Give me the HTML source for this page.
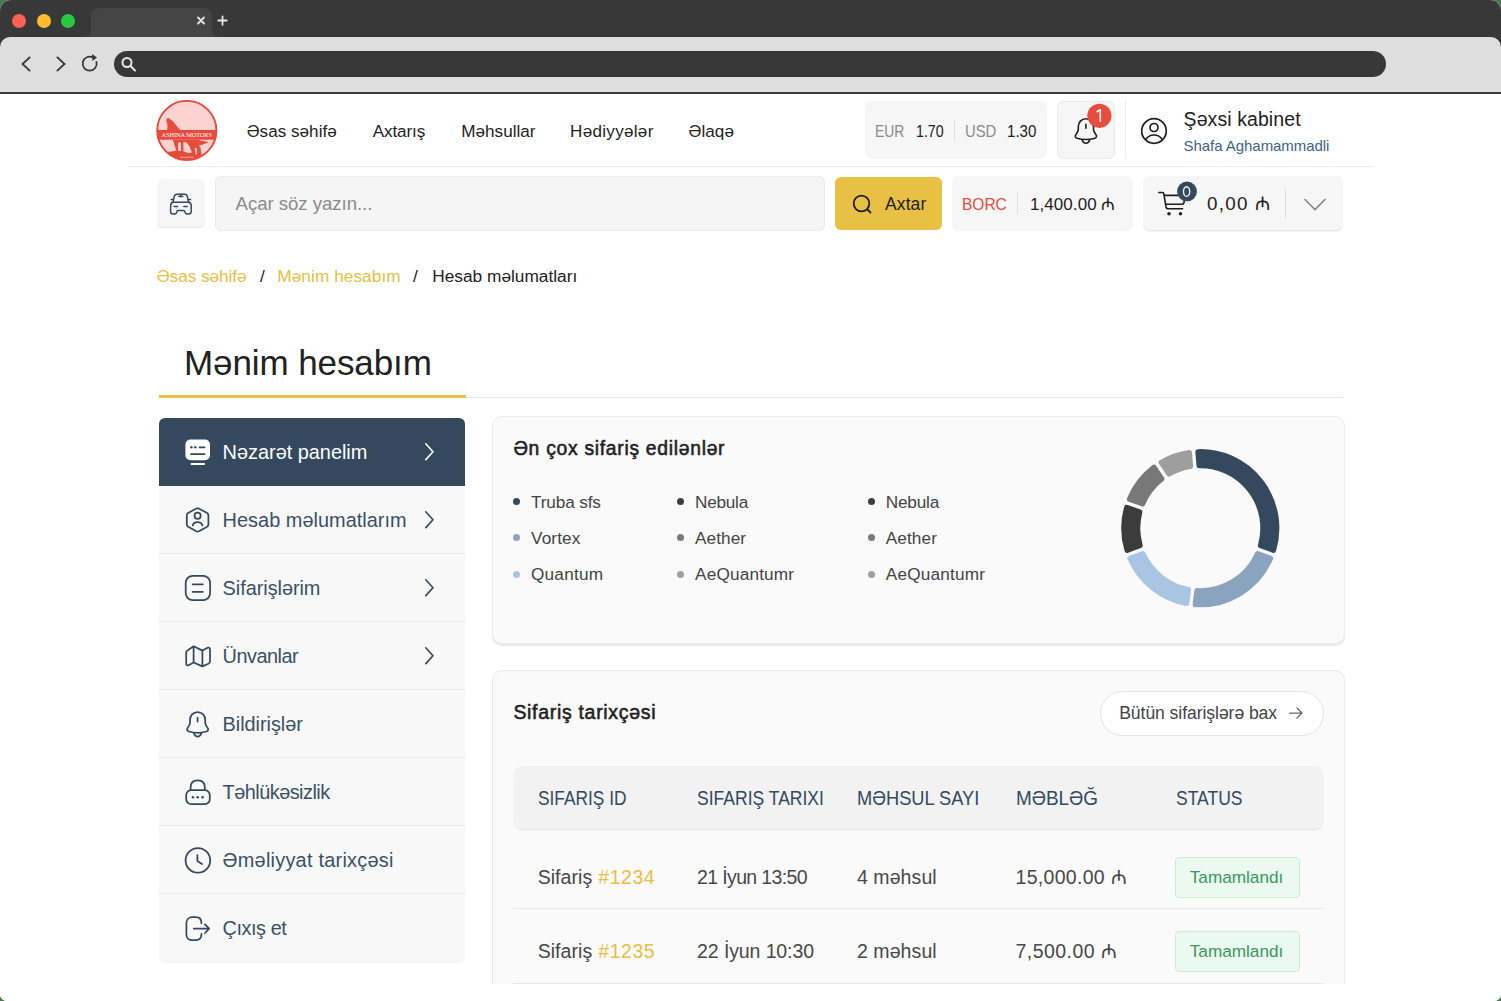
<!DOCTYPE html>
<html><head><meta charset="utf-8">
<style>
*{box-sizing:border-box;margin:0;padding:0}
html,body{width:1501px;height:1001px;overflow:hidden;background:#4a7a52;font-family:"Liberation Sans",sans-serif}
.win{position:absolute;left:0;top:0;width:1501px;height:1001px;border-radius:11px 11px 7px 7px;overflow:hidden;background:#fff}
.abs{position:absolute}
.t{position:absolute;white-space:nowrap;line-height:1}
</style></head><body>
<div class="win">
<div class="abs" style="left:0px;top:0px;width:1501px;height:60px;background:#383838"></div>
<div class="abs" style="left:12.4px;top:14.3px;width:14px;height:14px;border-radius:50%;background:#fe5f57"></div>
<div class="abs" style="left:36.6px;top:14.3px;width:14px;height:14px;border-radius:50%;background:#febc2e"></div>
<div class="abs" style="left:60.8px;top:14.3px;width:14px;height:14px;border-radius:50%;background:#28c840"></div>
<svg class="abs" style="left:80px;top:0" width="150" height="37" viewBox="0 0 150 37">
<path d="M4 37 C9 37 11 34 11 30 V16 C11 11.5 14.5 8 19 8 H124 C128.5 8 132 11.5 132 16 V30 C132 34 134 37 139 37 Z" fill="#454545"/>
</svg>
<div class="abs" style="left:0px;top:37px;width:1501px;height:55px;background:#dedede;border-radius:10px 10px 0 0"></div>
<div class="abs" style="left:0px;top:92px;width:1501px;height:2px;background:#3a3a3a"></div>
<div class="abs" style="left:114px;top:51px;width:1272px;height:26px;background:#383838;border-radius:13px"></div>
<svg class="abs" style="left:0;top:0" width="240" height="93" viewBox="0 0 240 93">
<g stroke="#e8e8e8" stroke-width="1.8" stroke-linecap="round" fill="none">
<path d="M198 17.5 L204 23.5 M204 17.5 L198 23.5"/>
<path d="M222.5 16.3 V24.8 M218.3 20.5 H226.7"/>
</g>
<g stroke="#383838" stroke-width="1.8" fill="none" stroke-linecap="square">
<path d="M29.5 57.5 L22.5 64 L29.5 70.5"/>
<path d="M57.5 57.5 L64.5 64 L57.5 70.5"/>
<path d="M96.5 62 A7 7 0 1 1 93 57.5"/>
</g>
<path d="M92 54 L97 57.5 L92.5 61 Z" fill="#383838"/>
<g stroke="#e8e8e8" stroke-width="2" fill="none">
<circle cx="127" cy="62.5" r="4.5"/>
<path d="M130.5 66 L135 70.5" stroke-linecap="round"/>
</g>
</svg>
<svg class="abs" style="left:156px;top:100px" width="62" height="62" viewBox="0 0 62 62">
<defs><clipPath id="lc"><circle cx="30.8" cy="30.5" r="29.6"/></clipPath></defs>
<circle cx="30.8" cy="30.5" r="29.6" fill="#fcd3d1"/>
<g clip-path="url(#lc)">
<path d="M0 39.6 H62 V62 H0 Z" fill="#e84a3c"/>
<path d="M11.2 30 L11.5 25.6 L10.2 19.9 L12 17.8 L14.6 19.4 L17.2 21.4 L19 24 L20.3 25.6 L22.5 28 L24.5 30 Z" fill="#e84a3c"/>
<g fill="#fcd3d1">
<path d="M0 39.6 H16.7 L18.5 45 L20.3 50.5 L17 51.3 L13 51.8 L0 52.5 Z"/>
<path d="M22.1 42.7 L24.8 42.3 L25 51 L22.3 51 Z"/>
<path d="M27.2 42.5 L29.5 42 L31.5 43.5 L33.3 46 L34.5 49 L36 52.5 L33 53 L29 52 L27.5 51.5 Z"/>
<path d="M38.8 47.5 L40.8 48.5 L41 54.5 L39.5 54.5 Z"/>
<path d="M43.5 39.6 H62 V53 L45.5 54.5 L44.5 48 L43 45.5 L47 44.5 L52.8 42.2 L47 41 L43.5 40.3 Z"/>
</g>
<rect x="0" y="30" width="62" height="9.6" fill="#e84a3c"/>
</g>
<circle cx="30.8" cy="30.5" r="29.6" fill="none" stroke="#e84a3c" stroke-width="1.9"/>
<text x="5.5" y="37" textLength="50.4" lengthAdjust="spacingAndGlyphs" font-family="Liberation Serif" font-size="6" fill="#fff">ASHINA MOTORS</text>
<path d="M24 57.3 H37.7" stroke="#f6b5ae" stroke-width="0.9"/>
</svg>
<div class="t" style="left:246.7px;top:122.82px;font-size:17.1px;color:#222;letter-spacing:0.022px;">Əsas səhifə</div>
<div class="t" style="left:372.7px;top:122.82px;font-size:17.1px;color:#222;letter-spacing:-0.097px;">Axtarış</div>
<div class="t" style="left:461.3px;top:122.82px;font-size:17.1px;color:#222;letter-spacing:0.02px;">Məhsullar</div>
<div class="t" style="left:570.1px;top:122.82px;font-size:17.1px;color:#222;letter-spacing:0.276px;">Hədiyyələr</div>
<div class="t" style="left:688.5px;top:122.82px;font-size:17.1px;color:#222;letter-spacing:0.064px;">Əlaqə</div>
<div class="abs" style="left:865px;top:101px;width:182px;height:58px;background:#f6f6f6;border-radius:7px"></div>
<div class="t" style="left:874.7px;top:122.61px;font-size:17px;color:#8a8a8a;transform:scaleX(0.8168);transform-origin:0.0px 0;">EUR</div>
<div class="t" style="left:916.0px;top:122.61px;font-size:17px;color:#222;transform:scaleX(0.8356);transform-origin:0.0px 0;">1.70</div>
<div class="abs" style="left:953.5px;top:120px;width:1px;height:21px;background:#e0e0e0"></div>
<div class="t" style="left:964.7px;top:122.61px;font-size:17px;color:#8a8a8a;transform:scaleX(0.8726);transform-origin:0.0px 0;">USD</div>
<div class="t" style="left:1007.3px;top:122.61px;font-size:17px;color:#222;transform:scaleX(0.8869);transform-origin:0.0px 0;">1.30</div>
<div class="abs" style="left:1057px;top:101px;width:58px;height:58px;background:#f6f6f6;border:1px solid #ebebeb;border-radius:6px"></div>
<svg class="abs" style="left:0;top:0" width="1501" height="1001" viewBox="0 0 1501 1001">
<g transform="translate(888.3 -593.2)" fill="none" stroke="#1e1e1e" stroke-width="1.6" stroke-linecap="round" stroke-linejoin="round">
<path d="M197.6 712 C193 712 190 715.5 190 720 V722.5 C190 724.5 189 726 187.8 727.5 C186.5 729 186.8 730.8 188.8 731.5 C194 733 201.2 733 206.4 731.5 C208.4 730.8 208.7 729 207.4 727.5 C206.2 726 205.2 724.5 205.2 722.5 V720 C205.2 715.5 202.2 712 197.6 712 Z"/>
<path d="M193.8 733 C194.5 735.5 196 736.5 197.6 736.5 C199.2 736.5 200.7 735.5 201.4 733 M197.6 717.6 V721.5"/>
</g>
<circle cx="1099.4" cy="115.8" r="12.1" fill="#e84c3d"/>
<path d="M1096.6 112 L1100.3 109.7 V121.8" fill="none" stroke="#fff" stroke-width="1.5" stroke-linejoin="round"/>
</svg>
<div class="abs" style="left:1125px;top:101px;width:1px;height:58px;background:#ececec"></div>
<svg class="abs" style="left:1140px;top:117px" width="28" height="28" viewBox="0 0 28 28">
<g fill="none" stroke="#1e1e1e" stroke-width="1.7">
<circle cx="14" cy="14" r="12.3"/><circle cx="14" cy="10.5" r="4"/>
<path d="M5.8 22.5 C8 19 11 18 14 18 C17 18 20 19 22.2 22.5"/>
</g></svg>
<div class="t" style="left:1183.6px;top:109.69px;font-size:19.5px;color:#222;letter-spacing:0.081px;">Şəxsi kabinet</div>
<div class="t" style="left:1183.6px;top:137.9px;font-size:15px;color:#3f5f86;letter-spacing:-0.053px;">Shafa Aghamammadli</div>
<div class="abs" style="left:128px;top:166px;width:1245px;height:1px;background:#ececec"></div>
<div class="abs" style="left:157px;top:179px;width:48px;height:48px;background:#f6f6f6;border-radius:6px;box-shadow:0 1px 0 #e6e6e6"></div>
<svg class="abs" style="left:0;top:0" width="1501" height="1001" viewBox="0 0 1501 1001">
<g transform="translate(165 189)" fill="none" stroke="#34495e" stroke-width="1.5" stroke-linecap="round" stroke-linejoin="round">
<path d="M8 13.3 L9.2 7.6 C9.5 6.1 10.5 5.2 12 5.2 H19.6 C21.1 5.2 22.1 6.1 22.4 7.6 L23.6 13.3"/>
<path d="M7.8 13.3 H23.8 M13.8 7.6 H17.8 M15.8 5.3 V7.6 M6.2 10.5 H8.3 M23.3 10.5 H25.5 M9.2 17.5 H12.6 M18.8 17.5 H22.2"/>
<path d="M7.8 13.3 C6.3 13.8 5.6 15 5.6 17 V22.5 C5.6 24 6.5 24.9 8 24.9 H9.8 C10.7 24.9 11.2 24.5 11.5 23.7 L12.2 22.2 C12.5 21.6 13 21.5 13.5 21.5 H18.3 C18.8 21.5 19.3 21.6 19.6 22.2 L20.3 23.7 C20.6 24.5 21.1 24.9 22 24.9 H23.8 C25.3 24.9 26.2 24 26.2 22.5 V17 C26.2 15 25.5 13.8 23.8 13.3"/>
</g></svg>
<div class="abs" style="left:215px;top:176px;width:610px;height:55px;background:#f5f5f5;border:1px solid #ebebeb;border-radius:6px"></div>
<div class="t" style="left:235.6px;top:195.06px;font-size:18.6px;color:#8a8a8a;letter-spacing:-0.041px;">Açar söz yazın...</div>
<div class="abs" style="left:835px;top:177px;width:107px;height:53px;background:#e8c043;border-radius:6px"></div>
<svg class="abs" style="left:851px;top:193px" width="22" height="22" viewBox="0 0 22 22">
<g fill="none" stroke="#1e1e1e" stroke-width="1.8" stroke-linecap="round">
<circle cx="10.5" cy="10.5" r="7.8"/><path d="M16.5 16.5 L19.5 19.5"/>
</g></svg>
<div class="t" style="left:885.0px;top:196.19px;font-size:17.5px;color:#222;letter-spacing:0.106px;">Axtar</div>
<div class="abs" style="left:952px;top:176px;width:181px;height:55px;background:#f6f6f6;border-radius:7px"></div>
<div class="t" style="left:962.4px;top:195.61px;font-size:17px;color:#e74c3c;transform:scaleX(0.9119);transform-origin:0.0px 0;">BORC</div>
<div class="abs" style="left:1017px;top:193px;width:1px;height:21px;background:#dedede"></div>
<div class="t" style="left:1030.0px;top:195.61px;font-size:17px;color:#222;letter-spacing:0.062px;">1,400.00 ₼</div>
<div class="abs" style="left:1143px;top:176px;width:200px;height:54px;background:#f6f6f6;border-radius:7px;box-shadow:0 1.5px 0 #e8e8e8"></div>
<svg class="abs" style="left:0;top:0" width="1501" height="1001" viewBox="0 0 1501 1001">
<g fill="none" stroke="#1e1e1e" stroke-width="1.6" stroke-linecap="round" stroke-linejoin="round">
<path d="M1158.8 192.5 H1162.5 C1163.2 192.5 1163.7 193 1163.8 193.6 L1166 206.8 C1166.2 208 1167.2 208.8 1168.4 208.8 H1182.6"/>
<path d="M1164.6 195.4 H1186 M1166.3 204.2 H1182 C1183 204.2 1183.8 203.5 1184 202.5 L1185.3 196"/>
</g>
<circle cx="1169" cy="213.7" r="1.75" fill="#1e1e1e"/><circle cx="1180.5" cy="213.7" r="1.75" fill="#1e1e1e"/>
<circle cx="1187" cy="191.4" r="9.9" fill="#34495e"/>
<ellipse cx="1186.6" cy="191.55" rx="3.1" ry="4.8" fill="none" stroke="#fff" stroke-width="1.3"/>
</svg>
<div class="t" style="left:1207.0px;top:194.89px;font-size:18.8px;color:#222;letter-spacing:1.313px;">0,00 ₼</div>
<div class="abs" style="left:1284.5px;top:189px;width:1.5px;height:29px;background:#dcdcdc"></div>
<svg class="abs" style="left:1302px;top:196px" width="26" height="16" viewBox="0 0 26 16">
<path d="M2.5 3 L13 13.5 L23.5 3" fill="none" stroke="#858585" stroke-width="1.6"/></svg>
<div class="t" style="left:156.7px;top:267.66px;font-size:17.3px;color:#e8c043;letter-spacing:-0.083px;">Əsas səhifə</div>
<div class="t" style="left:260.0px;top:267.66px;font-size:17.3px;color:#222;">/</div>
<div class="t" style="left:277.3px;top:267.66px;font-size:17.3px;color:#e8c043;letter-spacing:0.033px;">Mənim hesabım</div>
<div class="t" style="left:413.0px;top:267.66px;font-size:17.3px;color:#222;">/</div>
<div class="t" style="left:432.3px;top:267.66px;font-size:17.3px;color:#222;letter-spacing:-0.009px;">Hesab məlumatları</div>
<div class="t" style="left:184.0px;top:344.67px;font-size:35px;color:#222;letter-spacing:-0.096px;">Mənim hesabım</div>
<div class="abs" style="left:159px;top:397px;width:1184px;height:1px;background:#e9e9e9"></div>
<div class="abs" style="left:159px;top:395px;width:306.5px;height:3px;background:#e8c043"></div>
<div class="abs" style="left:159px;top:418px;width:306px;height:544px;background:#f8f8f8;border-radius:6px;box-shadow:0 1px 1px rgba(0,0,0,0.05)"></div>
<div class="abs" style="left:159px;top:418px;width:306px;height:68px;background:#34495e;border-radius:6px 6px 0 0"></div>
<div class="t" style="left:222.6px;top:442.95px;font-size:19.9px;color:#fff;letter-spacing:-0.005px;">Nəzarət panelim</div>
<div class="t" style="left:222.6px;top:510.95px;font-size:19.9px;color:#3b5066;letter-spacing:0.031px;">Hesab məlumatlarım</div>
<div class="abs" style="left:159px;top:553px;width:306px;height:1px;background:#e8e8e8"></div>
<div class="t" style="left:222.6px;top:578.95px;font-size:19.9px;color:#3b5066;letter-spacing:-0.046px;">Sifarişlərim</div>
<div class="abs" style="left:159px;top:621px;width:306px;height:1px;background:#e8e8e8"></div>
<div class="t" style="left:222.6px;top:646.95px;font-size:19.9px;color:#3b5066;letter-spacing:-0.5px;">Ünvanlar</div>
<div class="abs" style="left:159px;top:689px;width:306px;height:1px;background:#e8e8e8"></div>
<div class="t" style="left:222.6px;top:714.95px;font-size:19.9px;color:#3b5066;letter-spacing:-0.039px;">Bildirişlər</div>
<div class="abs" style="left:159px;top:757px;width:306px;height:1px;background:#e8e8e8"></div>
<div class="t" style="left:222.6px;top:782.95px;font-size:19.9px;color:#3b5066;letter-spacing:-0.527px;">Təhlükəsizlik</div>
<div class="abs" style="left:159px;top:825px;width:306px;height:1px;background:#e8e8e8"></div>
<div class="t" style="left:222.6px;top:850.95px;font-size:19.9px;color:#3b5066;letter-spacing:0.241px;">Əməliyyat tarixçəsi</div>
<div class="abs" style="left:159px;top:893px;width:306px;height:1px;background:#e8e8e8"></div>
<div class="t" style="left:222.6px;top:918.95px;font-size:19.9px;color:#3b5066;letter-spacing:-0.466px;">Çıxış et</div>
<svg class="abs" style="left:0;top:0" width="1501" height="1001" viewBox="0 0 1501 1001"><rect x="185.4" y="439.6" width="24.6" height="20.6" rx="5" fill="#fff"/><circle cx="191.4" cy="447.3" r="1.25" fill="#34495e"/><circle cx="195.3" cy="447.3" r="1.25" fill="#34495e"/><path d="M199.4 447.3 H204.6 M191 454.2 H204.6" stroke="#34495e" stroke-width="1.7" stroke-linecap="round"/><path d="M190.8 464 H204.8" stroke="#fff" stroke-width="2"/><path d="M425.8 443.8 L433 451.7 L425.8 459.59999999999997" fill="none" stroke="#fff" stroke-width="1.6" stroke-linecap="round" stroke-linejoin="round"/><path d="M196.3 508.6 C197.1 508.2 198.1 508.2 198.9 508.6 L207.1 513.1 C207.9 513.6 208.4 514.4 208.4 515.3 V524.6 C208.4 525.5 207.9 526.3 207.1 526.8 L198.9 531.3 C198.1 531.7 197.1 531.7 196.3 531.3 L188.1 526.8 C187.3 526.3 186.8 525.5 186.8 524.6 V515.3 C186.8 514.4 187.3 513.6 188.1 513.1 Z" fill="none" stroke="#34495e" stroke-width="1.75"/><circle cx="197.6" cy="515.8" r="3.1" fill="none" stroke="#34495e" stroke-width="1.75"/><path d="M192.8 525.5 C193.3 523.3 195.2 522 197.6 522 C200 522 201.9 523.3 202.4 525.5" fill="none" stroke="#34495e" stroke-width="1.75" stroke-linecap="round"/><path d="M425.8 511.80000000000007 L433 519.7 L425.8 527.6" fill="none" stroke="#34495e" stroke-width="1.6" stroke-linecap="round" stroke-linejoin="round"/><rect x="185.7" y="575.9" width="24.4" height="24.2" rx="7" fill="none" stroke="#34495e" stroke-width="1.75"/><path d="M192.6 584.3 H202.8 M192.6 591.8 H202.8" stroke="#34495e" stroke-width="1.75" stroke-linecap="round"/><path d="M425.8 579.8000000000001 L433 587.7 L425.8 595.6" fill="none" stroke="#34495e" stroke-width="1.6" stroke-linecap="round" stroke-linejoin="round"/><path d="M186.2 652.8 C186.2 651.6 186.8 650.7 187.8 650.2 L193.6 646.3 L202.4 650.6 L207.6 647.8 C208.8 647.2 210 648 210 649.4 V661.2 C210 662.4 209.4 663.3 208.4 663.8 L202.4 666.4 L193.6 662.5 L188.6 665.2 C187.4 665.8 186.2 665 186.2 663.6 Z" fill="none" stroke="#34495e" stroke-width="1.75" stroke-linejoin="round"/><path d="M193.6 646.3 V662.5 M202.4 650.6 V666.4" stroke="#34495e" stroke-width="1.75"/><path d="M425.8 647.8000000000001 L433 655.7 L425.8 663.6" fill="none" stroke="#34495e" stroke-width="1.6" stroke-linecap="round" stroke-linejoin="round"/><path d="M197.6 712 C193 712 190 715.5 190 720 V722.5 C190 724.5 189 726 187.8 727.5 C186.5 729 186.8 730.8 188.8 731.5 C194 733 201.2 733 206.4 731.5 C208.4 730.8 208.7 729 207.4 727.5 C206.2 726 205.2 724.5 205.2 722.5 V720 C205.2 715.5 202.2 712 197.6 712 Z" fill="none" stroke="#34495e" stroke-width="1.75" stroke-linejoin="round"/><path d="M193.8 733 C194.5 735.5 196 736.5 197.6 736.5 C199.2 736.5 200.7 735.5 201.4 733 M197.6 717.6 V721.5" fill="none" stroke="#34495e" stroke-width="1.75" stroke-linecap="round"/><path d="M190.6 790 V787.3 C190.6 782.6 193.5 780.3 197.7 780.3 C201.9 780.3 204.8 782.6 204.8 787.3 V790" fill="none" stroke="#34495e" stroke-width="1.75"/><rect x="186.2" y="790.2" width="23.6" height="14" rx="5" fill="none" stroke="#34495e" stroke-width="1.75"/><circle cx="192.9" cy="797.2" r="1.2" fill="#34495e"/><circle cx="197.7" cy="797.2" r="1.2" fill="#34495e"/><circle cx="202.6" cy="797.2" r="1.2" fill="#34495e"/><circle cx="197.9" cy="860.4" r="12.3" fill="none" stroke="#34495e" stroke-width="1.75"/><path d="M197.4 855 V861 L202 864" fill="none" stroke="#34495e" stroke-width="1.75" stroke-linecap="round" stroke-linejoin="round"/><path d="M201.4 923.2 V922.8 C201.4 919.5 199.3 917.2 195.8 917.2 H192.2 C188.8 917.2 186.4 919.6 186.4 923 V934.4 C186.4 937.8 188.8 940.2 192.2 940.2 H195.8 C199.3 940.2 201.4 937.9 201.4 934.6 V933.8" fill="none" stroke="#34495e" stroke-width="1.75" stroke-linecap="round"/><path d="M193.8 928.6 H209.2 M205 924.3 L209.2 928.6 L205 933" fill="none" stroke="#34495e" stroke-width="1.75" stroke-linecap="round" stroke-linejoin="round"/></svg>
<div class="abs" style="left:492px;top:416px;width:853px;height:228px;background:#fafafa;border:1px solid #ececec;border-radius:10px;box-shadow:0 2px 0 #e9e9e9"></div>
<div class="t" style="left:513.4px;top:439.26px;font-size:19.3px;color:#222;letter-spacing:0.72px;-webkit-text-stroke:0.55px #222;">Ən çox sifariş edilənlər</div>
<div class="abs" style="left:513.0px;top:498.2px;width:7.2px;height:7.2px;border-radius:50%;background:#34495e"></div>
<div class="t" style="left:531.0px;top:493.54px;font-size:17.2px;color:#444;letter-spacing:-0.13px;">Truba sfs</div>
<div class="abs" style="left:513.0px;top:534.2px;width:7.2px;height:7.2px;border-radius:50%;background:#8aa4c0"></div>
<div class="t" style="left:531.0px;top:529.54px;font-size:17.2px;color:#444;letter-spacing:0.125px;">Vortex</div>
<div class="abs" style="left:513.0px;top:570.7px;width:7.2px;height:7.2px;border-radius:50%;background:#a8c5e3"></div>
<div class="t" style="left:531.0px;top:566.04px;font-size:17.2px;color:#444;letter-spacing:0.218px;">Quantum</div>
<div class="abs" style="left:677.1999999999999px;top:498.2px;width:7.2px;height:7.2px;border-radius:50%;background:#3d3d3d"></div>
<div class="t" style="left:695.1px;top:493.54px;font-size:17.2px;color:#444;letter-spacing:-0.265px;">Nebula</div>
<div class="abs" style="left:677.1999999999999px;top:534.2px;width:7.2px;height:7.2px;border-radius:50%;background:#7b7b7b"></div>
<div class="t" style="left:695.1px;top:529.54px;font-size:17.2px;color:#444;letter-spacing:0.052px;">Aether</div>
<div class="abs" style="left:677.1999999999999px;top:570.7px;width:7.2px;height:7.2px;border-radius:50%;background:#a0a0a0"></div>
<div class="t" style="left:695.1px;top:566.04px;font-size:17.2px;color:#444;letter-spacing:0.164px;">AeQuantumr</div>
<div class="abs" style="left:868.1999999999999px;top:498.2px;width:7.2px;height:7.2px;border-radius:50%;background:#3d3d3d"></div>
<div class="t" style="left:885.8px;top:493.54px;font-size:17.2px;color:#444;letter-spacing:-0.205px;">Nebula</div>
<div class="abs" style="left:868.1999999999999px;top:534.2px;width:7.2px;height:7.2px;border-radius:50%;background:#7b7b7b"></div>
<div class="t" style="left:885.8px;top:529.54px;font-size:17.2px;color:#444;letter-spacing:0.092px;">Aether</div>
<div class="abs" style="left:868.1999999999999px;top:570.7px;width:7.2px;height:7.2px;border-radius:50%;background:#a0a0a0"></div>
<div class="t" style="left:885.8px;top:566.04px;font-size:17.2px;color:#444;letter-spacing:0.186px;">AeQuantumr</div>
<svg class="abs" style="left:0;top:0" width="1501" height="1001" viewBox="0 0 1501 1001"><path d="M1198.14 451.93 A76.3 76.3 0 0 1 1273.41 550.02 L1260.70 545.40 A62.8 62.8 0 0 0 1199.32 465.41 Z" fill="#34495e" stroke="#34495e" stroke-width="5.6" stroke-linejoin="round"/><path d="M1270.34 558.48 A76.3 76.3 0 0 1 1195.48 604.35 L1197.13 590.92 A62.8 62.8 0 0 0 1257.62 553.85 Z" fill="#8aa4bf" stroke="#8aa4bf" stroke-width="5.6" stroke-linejoin="round"/><path d="M1186.55 603.25 A76.3 76.3 0 0 1 1130.26 558.48 L1142.98 553.85 A62.8 62.8 0 0 0 1188.20 589.82 Z" fill="#a8c5e3" stroke="#a8c5e3" stroke-width="5.6" stroke-linejoin="round"/><path d="M1127.19 550.02 A76.3 76.3 0 0 1 1126.82 507.65 L1139.61 512.06 A62.8 62.8 0 0 0 1139.90 545.40 Z" fill="#3c3c3c" stroke="#3c3c3c" stroke-width="5.6" stroke-linejoin="round"/><path d="M1129.75 499.15 A76.3 76.3 0 0 1 1153.98 467.57 L1161.55 478.78 A62.8 62.8 0 0 0 1142.54 503.56 Z" fill="#787878" stroke="#787878" stroke-width="5.6" stroke-linejoin="round"/><path d="M1161.44 462.54 A76.3 76.3 0 0 1 1189.18 452.71 L1190.36 466.19 A62.8 62.8 0 0 0 1169.00 473.76 Z" fill="#9e9e9e" stroke="#9e9e9e" stroke-width="5.6" stroke-linejoin="round"/></svg>
<div class="abs" style="left:492px;top:670px;width:853px;height:420px;background:#fafafa;border:1px solid #e9e9e9;border-radius:10px"></div>
<div class="t" style="left:513.4px;top:703.39px;font-size:19.5px;color:#222;letter-spacing:0.691px;-webkit-text-stroke:0.55px #222;">Sifariş tarixçəsi</div>
<div class="abs" style="left:1099.5px;top:690.5px;width:224px;height:45.5px;background:#fff;border:1px solid #e4e4e4;border-radius:23px"></div>
<div class="t" style="left:1119.2px;top:704.7px;font-size:17.6px;color:#454545;letter-spacing:-0.073px;">Bütün sifarişlərə bax</div>
<svg class="abs" style="left:1288px;top:706px" width="16" height="14" viewBox="0 0 16 14">
<path d="M1.5 7 H14 M9 2 L14 7 L9 12" fill="none" stroke="#666" stroke-width="1.25" stroke-linecap="round" stroke-linejoin="round"/></svg>
<div class="abs" style="left:513px;top:766px;width:811px;height:62.5px;background:#f2f2f2;border-radius:10px;box-shadow:0 1.5px 0 #eaeaea"></div>
<div class="t" style="left:537.7px;top:787.73px;font-size:20.4px;color:#34495e;transform:scaleX(0.849);transform-origin:0.0px 0;">SIFARIŞ ID</div>
<div class="t" style="left:697.1px;top:787.73px;font-size:20.4px;color:#34495e;transform:scaleX(0.8592);transform-origin:0.0px 0;">SIFARIŞ TARIXI</div>
<div class="t" style="left:856.9px;top:787.73px;font-size:20.4px;color:#34495e;transform:scaleX(0.8955);transform-origin:0.0px 0;">MƏHSUL SAYI</div>
<div class="t" style="left:1015.5px;top:787.73px;font-size:20.4px;color:#34495e;transform:scaleX(0.9273);transform-origin:0.0px 0;">MƏBLƏĞ</div>
<div class="t" style="left:1175.6px;top:787.73px;font-size:20.4px;color:#34495e;transform:scaleX(0.8591);transform-origin:0.0px 0;">STATUS</div>
<div class="t" style="left:537.7px;top:867.99px;font-size:19.5px;color:#484848;letter-spacing:0.048px;">Sifariş</div>
<div class="t" style="left:598.3px;top:867.99px;font-size:19.5px;color:#e8c043;letter-spacing:0.523px;">#1234</div>
<div class="t" style="left:697.1px;top:867.99px;font-size:19.5px;color:#484848;letter-spacing:-0.648px;">21 İyun 13:50</div>
<div class="t" style="left:856.9px;top:867.99px;font-size:19.5px;color:#484848;letter-spacing:0.09px;">4 məhsul</div>
<div class="t" style="left:1015.5px;top:867.99px;font-size:19.5px;color:#484848;letter-spacing:0.304px;">15,000.00 ₼</div>
<div class="abs" style="left:1175px;top:856.5px;width:125px;height:41px;background:#ebf9f0;border:1px solid #c9ecd4;border-radius:4px"></div>
<div class="t" style="left:1189.8px;top:869.14px;font-size:17.2px;color:#3a9a5b;letter-spacing:-0.016px;">Tamamlandı</div>
<div class="abs" style="left:513px;top:908px;width:811px;height:1px;background:#e6e6e6"></div>
<div class="t" style="left:537.7px;top:942.09px;font-size:19.5px;color:#484848;letter-spacing:0.048px;">Sifariş</div>
<div class="t" style="left:598.3px;top:942.09px;font-size:19.5px;color:#e8c043;letter-spacing:0.523px;">#1235</div>
<div class="t" style="left:697.1px;top:942.09px;font-size:19.5px;color:#484848;letter-spacing:-0.106px;">22 İyun 10:30</div>
<div class="t" style="left:856.9px;top:942.09px;font-size:19.5px;color:#484848;letter-spacing:0.09px;">2 məhsul</div>
<div class="t" style="left:1015.5px;top:942.09px;font-size:19.5px;color:#484848;letter-spacing:0.451px;">7,500.00 ₼</div>
<div class="abs" style="left:1175px;top:931px;width:125px;height:41px;background:#ebf9f0;border:1px solid #c9ecd4;border-radius:4px"></div>
<div class="t" style="left:1189.8px;top:943.24px;font-size:17.2px;color:#3a9a5b;letter-spacing:-0.016px;">Tamamlandı</div>
<div class="abs" style="left:513px;top:982.5px;width:811px;height:1px;background:#e6e6e6"></div>
<div class="abs" style="left:0px;top:983.5px;width:1501px;height:18px;background:#fff"></div>
</div>
</body></html>
